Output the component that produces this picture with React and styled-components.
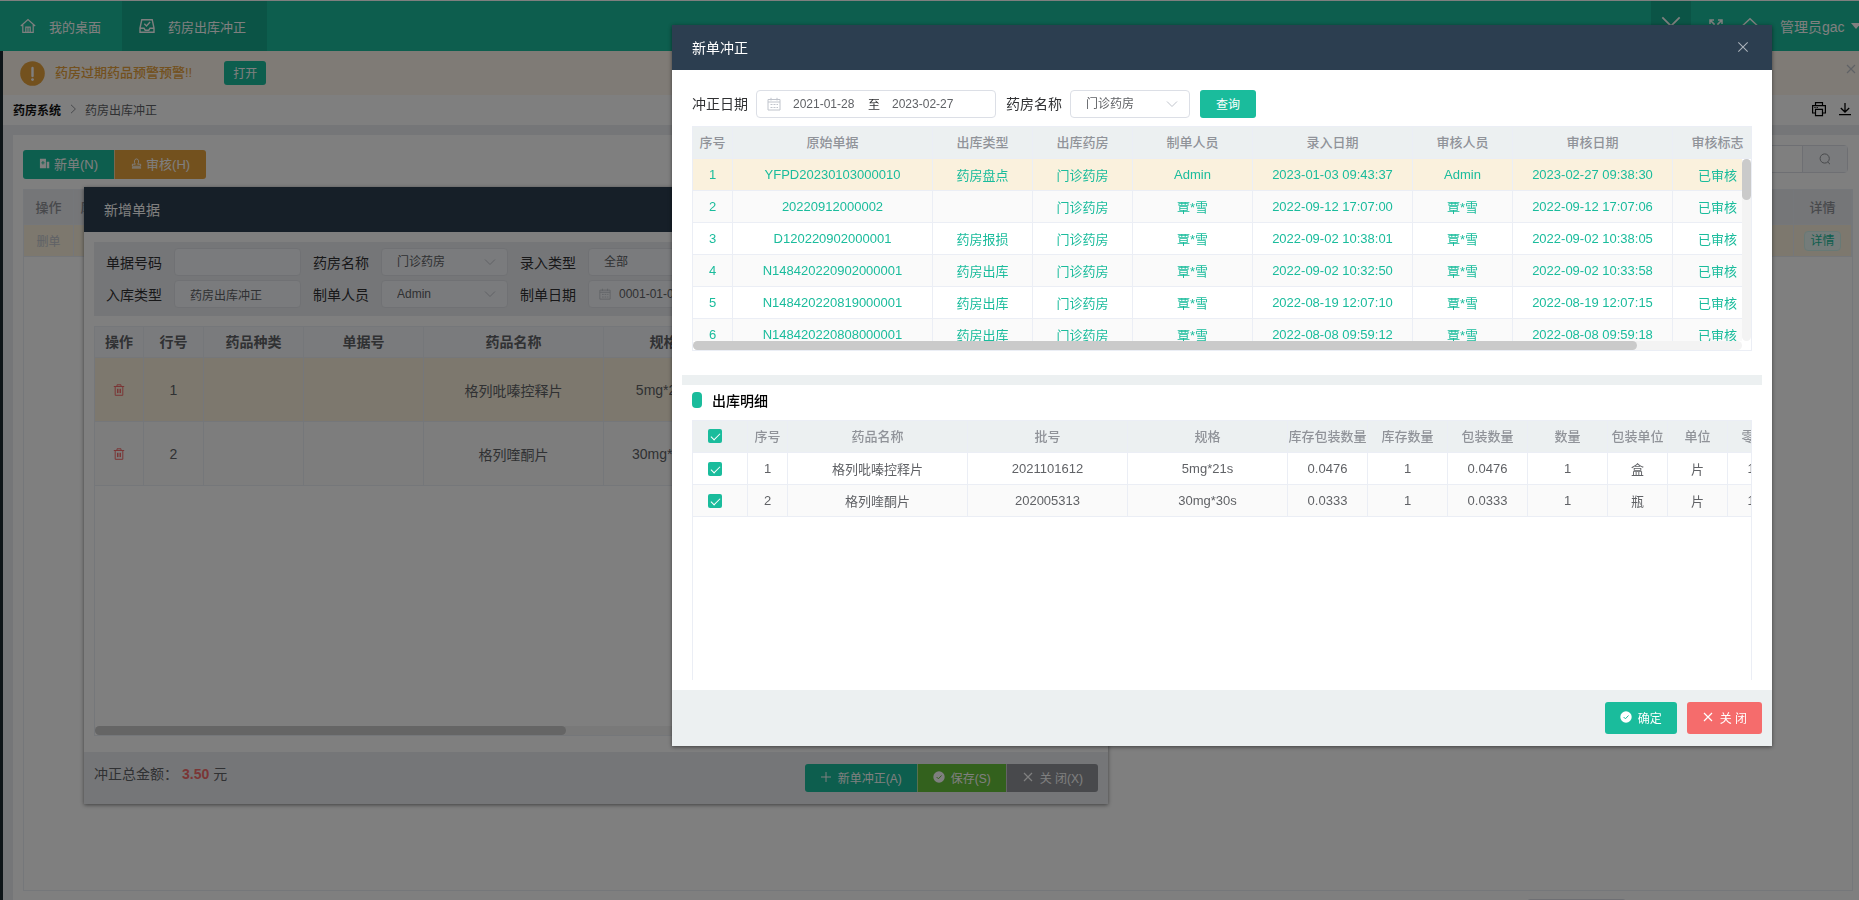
import React from "react";
import styled, { createGlobalStyle, css } from "styled-components";

const color = {
  primary: "#1abc9c",
  primaryDark: "#17a98c",
  success: "#67c23a",
  warning: "#e6a23c",
  danger: "#f56c6c",
  info: "#909399",
  navy: "#2c3e50",
  panel: "#ecf0f1",
  grey: "#ebecf0",
  line: "#ebeef5",
  field: "#dcdfe6",
  highlight: "#faf1dd",
  text: "#606266",
};

const GlobalStyle = createGlobalStyle`
  * { box-sizing: border-box; }
  body {
    margin: 0;
    overflow: hidden;
    color: ${color.text};
    font-family: "Liberation Sans", "Noto Sans CJK SC", sans-serif;
    font-size: 13px;
    background: #fff;
  }
  button, input, select { font-family: inherit; }
  button { cursor: pointer; }
`;

/* ---------- icons ---------- */

const Svg = styled.svg`
  flex: none;
  width: ${(p) => p.$size || 12}px;
  height: ${(p) => p.$size || 12}px;
  fill: none;
  stroke: currentColor;
  stroke-width: ${(p) => p.$stroke || 1};
`;

const HomeIcon = () => (
  <Svg $size={16} viewBox="0 0 16 16" $stroke={1.2} aria-hidden="true">
    <path d="M.8 8 8 1.6 15.2 8M2.8 6.600V14.400h10.400V6.600M5.800 14V9.200h4.400V14M8 9.200v5" />
  </Svg>
);
const InboxIcon = () => (
  <Svg $size={16} viewBox="0 0 16 16" $stroke={1.4} aria-hidden="true">
    <path d="M2.8 1.7h10.4L15 10v4.3H1V10zM1 10.2h4l1.2 2h3.6l1.2-2h4M5.3 5.8l2.2 2.2 3.6-4" />
  </Svg>
);
const CrossIcon = ({ size = 12, stroke = 1.2 }) => (
  <Svg $size={size} viewBox="0 0 12 12" $stroke={stroke} aria-hidden="true">
    <path d="m2 2 8 8m0-8-8 8" />
  </Svg>
);
const ExpandIcon = () => (
  <Svg $size={16} viewBox="0 0 16 16" $stroke={1.5} aria-hidden="true">
    <path d="M2 6V2h4M2 2l4.6 4.6M14 6V2h-4m4 0L9.4 6.6M2 10v4h4m-4 0 4.6-4.6M14 10v4h-4m4 0L9.4 9.4" />
  </Svg>
);
const RoofIcon = () => (
  <Svg $size={18} viewBox="0 0 18 18" $stroke={1.5} aria-hidden="true">
    <path d="m1 9.3 8-7.6 8 7.6M4 8v8h10V8" />
  </Svg>
);
const WarnIcon = () => (
  <Svg $size={25} viewBox="0 0 25 25" aria-hidden="true">
    <circle cx="12.5" cy="12.5" r="12.3" fill={color.warning} stroke="none" />
    <path d="M12.5 7v8" stroke="#fff" strokeWidth="2.4" strokeLinecap="round" />
    <circle cx="12.5" cy="18.6" r="1.4" fill="#fff" stroke="none" />
  </Svg>
);
const ChevronRight = () => (
  <Svg $size={10} viewBox="0 0 10 10" aria-hidden="true">
    <path d="m3 .8 4.4 4.2L3 9.2" />
  </Svg>
);
const PrintIcon = () => (
  <Svg $size={16} viewBox="0 0 16 16" $stroke={1.2} aria-hidden="true">
    <path d="M4.5 4.5V1.6h7v2.9M4.5 12H1.6V4.6h12.8V12h-2.9M4.5 8.4h7v6.2h-7zM3.4 6.5h1.2m1 0h1.2" />
  </Svg>
);
const DownloadIcon = () => (
  <Svg $size={16} viewBox="0 0 16 16" $stroke={1.3} aria-hidden="true">
    <path d="M8 2v9M3.8 7 8 11l4.2-4M2 13.6h12" />
  </Svg>
);
const SearchIcon = () => (
  <Svg viewBox="0 0 12 12" aria-hidden="true">
    <circle cx="5.7" cy="5.5" r="4.6" />
    <path d="m8.8 9 2.2 2.2" />
  </Svg>
);
const NewDocIcon = () => (
  <Svg $size={11} viewBox="0 0 12 12" aria-hidden="true">
    <path
      d="M1 .8h6.6v10.4H1zM8.4 4h2.8v7.2H8.4zM2.4 4.8h1.4V3.4h1v1.4h1.4v1H4.8v1.4h-1V5.8H2.4z"
      fill="currentColor"
      fillRule="evenodd"
      stroke="none"
    />
  </Svg>
);
const StampIcon = () => (
  <Svg $size={11} viewBox="0 0 12 12" aria-hidden="true">
    <path d="M4.7 6.8C3 4.6 3.5 1 6 1s3 3.6 1.3 5.8h3.2V9h-9V6.8z" />
    <path d="M1 10.8h10" strokeWidth="1.4" />
  </Svg>
);
const TrashIcon = () => (
  <Svg viewBox="0 0 12 12" aria-hidden="true">
    <path d="M.8 2.5h10.4M4 2.3V.8h4v1.5M2.2 2.7v8.6h7.6V2.7M4.5 4.8v4.3m1.5-4.3v4.3m1.5-4.3v4.3" />
  </Svg>
);
const PlusIcon = () => (
  <Svg viewBox="0 0 12 12" aria-hidden="true">
    <path d="M6 1v10M1 6h10" />
  </Svg>
);
const CheckCircleIcon = ({ tick }) => (
  <Svg viewBox="0 0 12 12" aria-hidden="true">
    <circle cx="6" cy="6" r="5.7" fill="currentColor" stroke="none" />
    <path d="m3.6 6 1.8 1.8 3.1-3.3" stroke={tick} />
  </Svg>
);
const CalendarIcon = ({ size = 14 }) => (
  <Svg $size={size} viewBox="0 0 14 14" aria-hidden="true">
    <path d="M1 2.5h12V13H1zM1 5h12M4 .8v2.7M10 .8v2.7M3.500 7.500h2m1 0h2m1 0h1.500m-7.500 3h2m1 0h2m1 0h1.500" />
  </Svg>
);
const ChevronDown = () => (
  <Svg viewBox="0 0 12 12" aria-hidden="true">
    <path d="m1 3.5 5 5 5-5" />
  </Svg>
);

/* ---------- controls ---------- */

const tones = {
  primary: color.primary,
  success: color.success,
  warning: color.warning,
  danger: color.danger,
  info: color.info,
};

const Button = styled.button`
  display: inline-flex;
  align-items: center;
  justify-content: center;
  gap: ${(p) => p.$gap || 6}px;
  height: ${(p) => p.$h || 28}px;
  padding: 0 ${(p) => p.$pad || 15}px 2px;
  border: 0;
  border-radius: 3px;
  background: ${(p) => tones[p.$tone]};
  color: #fff;
  font-size: ${(p) => p.$font || 12}px;
  white-space: nowrap;
`;

const ButtonGroup = styled.div`
  display: flex;
  ${Button} {
    border-radius: 0;
  }
  ${Button}:first-child {
    border-radius: 3px 0 0 3px;
  }
  ${Button}:last-child {
    border-radius: 0 3px 3px 0;
  }
  ${Button} + ${Button} {
    border-left: 1px solid rgba(255, 255, 255, 0.5);
  }
`;

const IconButton = styled.button`
  display: flex;
  align-items: center;
  justify-content: center;
  padding: 0;
  border: 0;
  background: none;
  color: inherit;
`;

const Field = styled.div`
  display: flex;
  align-items: center;
  width: ${(p) => p.$w}px;
  height: 28px;
  padding: 0 ${(p) => (p.$icon ? 10 : 11)}px 0 ${(p) => (p.$icon ? 10 : 15)}px;
  border: 1px solid ${color.field};
  border-radius: 4px;
  background: #fff;
  color: #c0c4cc;
`;

const bareControl = css`
  min-width: 0;
  height: 100%;
  padding: 0;
  border: 0;
  outline: 0;
  background: none;
  color: ${color.text};
  font-size: 12px;
`;

const TextInput = styled.input`
  ${bareControl}
  width: ${(p) => (p.$w ? `${p.$w}px` : "100%")};
`;

const Select = styled.select`
  ${bareControl}
  flex: 1;
  appearance: none;
`;

const Label = styled.label`
  color: #303133;
  font-size: 14px;
  white-space: nowrap;
`;

const Checkbox = styled.input.attrs({ type: "checkbox" })`
  appearance: none;
  display: block;
  position: relative;
  width: 14px;
  height: 14px;
  margin: 0;
  border-radius: 2px;
  background: ${color.primary};
  &:checked::after {
    content: "";
    position: absolute;
    left: 5px;
    top: 2px;
    width: 4px;
    height: 8px;
    border: solid #fff;
    border-width: 0 1px 1px 0;
    transform: rotate(45deg);
  }
`;

function SelectField({ id, value, width }) {
  return (
    <Field $w={width}>
      <Select id={id} defaultValue={value}>
        <option>{value}</option>
      </Select>
      <ChevronDown />
    </Field>
  );
}

/* ---------- tables ---------- */

const Table = styled.table`
  table-layout: fixed;
  width: ${(p) => (p.$w ? `${p.$w}px` : "100%")};
  border-collapse: separate;
  border-spacing: 0;
  font-size: ${(p) => p.$font || 13}px;
`;

const Th = styled.th`
  height: ${(p) => p.$h || 32}px;
  padding: 0 0 2px;
  border-right: 1px solid ${color.line};
  border-bottom: 1px solid ${color.line};
  background: ${(p) => p.$bg || color.panel};
  color: ${(p) => p.$color || color.info};
  font-weight: ${(p) => p.$weight || 500};
  text-align: center;
  white-space: nowrap;
`;

const Td = styled.td`
  height: ${(p) => p.$h || 32}px;
  padding: 0;
  border-right: 1px solid ${color.line};
  border-bottom: 1px solid ${color.line};
  text-align: center;
  white-space: nowrap;
`;

const Tr = styled.tr`
  background: ${(p) => (p.$active ? color.highlight : p.$striped ? "#fafafa" : "#fff")};
  color: ${(p) => p.$color || "inherit"};
`;

const CheckCell = styled.div`
  padding-left: 15px;
`;

const Columns = ({ widths }) => (
  <colgroup>
    {widths.map((w, i) => (
      <col key={i} style={{ width: w }} />
    ))}
  </colgroup>
);

const total = (widths) => widths.reduce((a, b) => a + b, 0);

const Frame = styled.div`
  display: flex;
  flex-direction: column;
  height: ${(p) => p.$h}px;
  border: 1px solid ${color.line};
  border-bottom-width: ${(p) => (p.$open ? 0 : 1)}px;
  background: #fff;
  overflow: hidden;
`;

const HeadClip = styled.div`
  flex: none;
  overflow: hidden;
`;

const ScrollArea = styled.div`
  flex: 1;
  display: grid;
  grid-template-columns: minmax(0, 1fr) ${(p) => (p.$vertical ? "9px" : "0")};
  grid-template-rows: minmax(0, 1fr) 9px;
  min-height: 0;
`;

const Clip = styled.div`
  overflow: hidden;
`;

const Track = styled.div`
  border-radius: 5px;
  background: #f3f3f3;
`;

const Thumb = styled.div`
  width: ${(p) => p.$w || "100%"};
  height: ${(p) => p.$h || "100%"};
  border-radius: 5px;
  background: #cacaca;
`;

/* ---------- application page ---------- */

const Page = styled.div`
  display: flex;
  flex-direction: column;
  height: 100vh;
  border-top: 1px solid #fff;
  overflow: hidden;
`;

const TopBar = styled.header`
  display: flex;
  flex: none;
  height: 50px;
  padding-left: 3px;
  background: ${color.primary};
  color: #fff;
`;

const NavTab = styled.a`
  display: flex;
  align-items: center;
  gap: 13px;
  padding: 0 21px 0 17px;
  background: ${(p) => (p.$active ? color.primaryDark : "none")};
  color: #fff;
  text-decoration: none;
`;

const Actions = styled.div`
  display: flex;
  flex: none;
  width: 208px;
  margin-left: auto;
  overflow: hidden;
  ${IconButton} {
    flex: none;
    width: 34px;
  }
  ${IconButton}:first-child {
    width: 40px;
    margin-right: 8px;
    background: ${color.primaryDark};
  }
`;

const User = styled.button`
  display: flex;
  flex: none;
  align-items: center;
  gap: 6px;
  padding: 0 0 0 13px;
  border: 0;
  background: none;
  color: #fff;
  font-size: 14px;
  &::after {
    content: "";
    border: 5px solid transparent;
    border-top: 6px solid #fff;
    border-bottom: 0;
  }
`;

const Body = styled.div`
  display: flex;
  flex: 1;
  min-height: 0;
`;

const SideStrip = styled.div`
  width: 3px;
  background: #1c2a30;
`;

const Main = styled.main`
  flex: 1;
  display: flex;
  flex-direction: column;
  min-width: 0;
  background: ${color.grey};
`;

const Alert = styled.div`
  display: flex;
  flex: none;
  align-items: center;
  height: 44px;
  padding: 0 2px 0 17px;
  background: #fff6ec;
  color: ${color.warning};
  font-weight: 500;
`;

const AlertText = styled.span`
  margin: 0 32px 0 10px;
  padding-bottom: 3px;
`;

const AlertClose = styled(IconButton)`
  align-self: flex-start;
  margin: 12px 0 0 auto;
  color: #c0c4cc;
`;

const Crumbs = styled.nav`
  display: flex;
  flex: none;
  align-items: center;
  gap: 7px;
  height: 30px;
  padding: 0 6px 2px 10px;
  background: #fff;
  font-size: 12px;
  svg {
    color: #909399;
  }
`;

const CrumbLink = styled.a`
  color: #111;
  font-weight: 700;
  text-decoration: none;
`;

const CrumbTools = styled.div`
  display: flex;
  gap: 10px;
  margin-left: auto;
  svg {
    color: #000;
  }
`;

const Panel = styled.section`
  flex: 1;
  min-height: 0;
  margin: 10px 0 0 10px;
  padding: 10px 6px 0 10px;
  background: #fff;
  overflow: hidden;
`;

const Toolbar = styled.div`
  display: flex;
  justify-content: space-between;
  height: 44px;
  padding: 0 5px 0 0;
`;

const ToolButtons = styled(ButtonGroup)`
  padding-top: 5px;
`;

const Search = styled.div`
  display: flex;
  width: 260px;
  height: 28px;
  border: 1px solid ${color.field};
  border-radius: 4px;
  ${TextInput} {
    flex: 1;
    padding: 0 10px;
  }
  ${IconButton} {
    width: 45px;
    border-left: 1px solid ${color.field};
    background: #f5f7fa;
    color: ${color.info};
  }
`;

const ListFrame = styled.div`
  height: calc(100vh - 198px);
  border: 1px solid ${color.line};
  overflow: hidden;
`;

const RowLink = styled.a`
  color: #c0c4cc;
  font-size: 12px;
  text-decoration: none;
`;

const DetailTag = styled.button`
  height: 20px;
  padding: 0 5px;
  border: 1px solid #d1f2eb;
  border-radius: 4px;
  background: #e8f8f5;
  color: ${color.primary};
  font-size: 12px;
  line-height: 18px;
`;

const Pager = styled.div`
  width: 99px;
  height: 28px;
  margin: 8px 227px 0 auto;
  border: 1px solid ${color.field};
  border-radius: 3px;
`;

/* ---------- dialogs ---------- */

const Dialog = styled.section`
  width: ${(p) => p.$w}px;
  background: #fff;
  box-shadow: 0 1px 4px rgba(0, 0, 0, 0.5);
`;

const DialogHead = styled.header`
  display: flex;
  align-items: center;
  justify-content: space-between;
  height: 45px;
  padding: 0 22px 2px 20px;
  background: ${color.navy};
  color: #fff;
`;

const DialogTitle = styled.h2`
  margin: 0;
  font-size: 14px;
  font-weight: 400;
`;

const CloseButton = styled(IconButton)`
  color: #aab2ba;
`;

const OrderLayer = styled.div`
  position: absolute;
  left: 84px;
  top: 187px;
`;

const Mask = styled.div`
  position: fixed;
  inset: 0;
  display: flex;
  align-items: flex-start;
  justify-content: flex-end;
  padding: 25px 87px 0 0;
  background: rgba(0, 0, 0, 0.5);
`;

const OrderBody = styled.div`
  display: flex;
  flex-direction: column;
  gap: 10px;
  padding: 10px 10px 16px;
`;

const OrderForm = styled.form`
  display: grid;
  grid-template-columns: repeat(3, 56px 127px);
  align-items: center;
  gap: 4px 12px;
  padding: 6px 12px 8px;
  background: ${color.grey};
  ${Field} {
    border-color: #e0e3e9;
    background: #f5f7fa;
  }
`;

const OrderFoot = styled.footer`
  display: flex;
  align-items: flex-start;
  justify-content: space-between;
  height: 52px;
  padding: 12px 10px;
  background: ${color.grey};
  font-size: 14px;
  line-height: 20px;
`;

const Amount = styled.strong`
  margin: 0 4px;
  color: ${color.danger};
`;

const DeleteButton = styled(IconButton)`
  margin: 0 auto;
  color: ${color.danger};
`;

const ReverseBody = styled.div`
  padding: 20px 10px 10px;
`;

const Block = styled.div`
  padding: 0 10px;
`;

const Query = styled.form`
  display: flex;
  align-items: center;
  gap: 8px;
  margin-bottom: 8px;
`;

const QueryGroup = styled.div`
  display: flex;
  align-items: center;
  gap: 8px;
  margin-right: 2px;
  ${Label} {
    padding-bottom: 2px;
  }
`;

const DateInput = styled(TextInput)`
  margin-left: ${(p) => p.$gap || 12}px;
`;

const RangeWord = styled.span`
  padding-bottom: 2px;
  color: #303133;
  font-size: 12px;
`;

const Divider = styled.hr`
  height: 10px;
  margin: 24px 0 0;
  border: 0;
  background: ${color.panel};
`;

const SectionTitle = styled.h3`
  display: flex;
  align-items: center;
  gap: 10px;
  height: 29px;
  margin: 0 0 6px;
  color: #000;
  font-size: 14px;
  font-weight: 500;
  &::before {
    content: "";
    width: 10px;
    height: 16px;
    border-radius: 4px;
    background: ${color.primary};
  }
`;

const ReverseFoot = styled.footer`
  display: flex;
  align-items: center;
  justify-content: flex-end;
  gap: 10px;
  height: 56px;
  padding: 0 10px;
  background: ${color.panel};
`;

/* ---------- data ---------- */

const orderCols = ["操作", "行号", "药品种类", "单据号", "药品名称", "规格", "批号", "单位", "数量"];
const orderWidths = [49, 60, 100, 120, 180, 120, 120, 120, 133];
const orderRows = [
  ["1", "", "", "格列吡嗪控释片", "5mg*21s", "", "", ""],
  ["2", "", "", "格列喹酮片", "30mg*30s", "", "", ""],
];

const sourceCols = ["序号", "原始单据", "出库类型", "出库药房", "制单人员", "录入日期", "审核人员", "审核日期", "审核标志"];
const sourceWidths = [40, 200, 100, 100, 120, 160, 100, 160, 90];
const sourceRows = [
  ["1", "YFPD20230103000010", "药房盘点", "门诊药房", "Admin", "2023-01-03 09:43:37", "Admin", "2023-02-27 09:38:30", "已审核"],
  ["2", "20220912000002", "", "门诊药房", "覃*雪", "2022-09-12 17:07:00", "覃*雪", "2022-09-12 17:07:06", "已审核"],
  ["3", "D120220902000001", "药房报损", "门诊药房", "覃*雪", "2022-09-02 10:38:01", "覃*雪", "2022-09-02 10:38:05", "已审核"],
  ["4", "N148420220902000001", "药房出库", "门诊药房", "覃*雪", "2022-09-02 10:32:50", "覃*雪", "2022-09-02 10:33:58", "已审核"],
  ["5", "N148420220819000001", "药房出库", "门诊药房", "覃*雪", "2022-08-19 12:07:10", "覃*雪", "2022-08-19 12:07:15", "已审核"],
  ["6", "N148420220808000001", "药房出库", "门诊药房", "覃*雪", "2022-08-08 09:59:12", "覃*雪", "2022-08-08 09:59:18", "已审核"],
];

const detailCols = ["序号", "药品名称", "批号", "规格", "库存包装数量", "库存数量", "包装数量", "数量", "包装单位", "单位", "零售单价"];
const detailWidths = [55, 40, 180, 160, 160, 80, 80, 80, 80, 60, 60, 80];
const detailRows = [
  ["1", "格列吡嗪控释片", "2021101612", "5mg*21s", "0.0476", "1", "0.0476", "1", "盒", "片", "1.0000"],
  ["2", "格列喹酮片", "202005313", "30mg*30s", "0.0333", "1", "0.0333", "1", "瓶", "片", "1.0000"],
];

/* ---------- views ---------- */

function ListPage() {
  return (
    <Page>
      <TopBar>
        <NavTab href="#desk"><HomeIcon />我的桌面</NavTab>
        <NavTab href="#reverse" $active><InboxIcon />药房出库冲正</NavTab>
        <Actions>
          <IconButton aria-label="关闭标签"><CrossIcon size={26} stroke={0.8} /></IconButton>
          <IconButton aria-label="全屏"><ExpandIcon /></IconButton>
          <IconButton aria-label="首页"><RoofIcon /></IconButton>
          <User>管理员gac</User>
        </Actions>
      </TopBar>
      <Body>
        <SideStrip />
        <Main>
          <Alert>
            <WarnIcon />
            <AlertText>药房过期药品预警预警!!</AlertText>
            <Button $tone="primary" $h={24} $pad={9}>打开</Button>
            <AlertClose aria-label="关闭提醒"><CrossIcon size={12} /></AlertClose>
          </Alert>
          <Crumbs>
            <CrumbLink href="#pharmacy">药房系统</CrumbLink>
            <ChevronRight />
            <span>药房出库冲正</span>
            <CrumbTools>
              <IconButton aria-label="打印"><PrintIcon /></IconButton>
              <IconButton aria-label="下载"><DownloadIcon /></IconButton>
            </CrumbTools>
          </Crumbs>
          <Panel>
            <Toolbar>
              <ToolButtons>
                <Button $tone="primary" $h={29} $pad={16} $gap={4} $font={13}><NewDocIcon />新单(N)</Button>
                <Button $tone="warning" $h={29} $pad={16} $gap={4} $font={13}><StampIcon />审核(H)</Button>
              </ToolButtons>
              <Search>
                <TextInput aria-label="搜索" />
                <IconButton aria-label="查找"><SearchIcon /></IconButton>
              </Search>
            </Toolbar>
            <ListFrame>
              <Table>
                <colgroup>
                  <col style={{ width: 50 }} />
                  <col style={{ width: 66 }} />
                  <col />
                  <col style={{ width: 58 }} />
                </colgroup>
                <thead>
                  <tr>
                    <Th $h={35} $bg={color.grey}>操作</Th>
                    <Th $h={35} $bg={color.grey}>库房名称</Th>
                    <Th $h={35} $bg={color.grey} />
                    <Th $h={35} $bg={color.grey}>详情</Th>
                  </tr>
                </thead>
                <tbody>
                  <Tr $active>
                    <Td><RowLink href="#delete">删单</RowLink></Td>
                    <Td />
                    <Td />
                    <Td><DetailTag>详情</DetailTag></Td>
                  </Tr>
                </tbody>
              </Table>
            </ListFrame>
            <Pager />
          </Panel>
        </Main>
      </Body>
    </Page>
  );
}

function OrderDialog() {
  return (
    <OrderLayer>
      <Dialog $w={1024}>
        <DialogHead>
          <DialogTitle>新增单据</DialogTitle>
        </DialogHead>
        <OrderBody>
          <OrderForm>
            <Label htmlFor="no">单据号码</Label>
            <Field $w={127}><TextInput id="no" /></Field>
            <Label htmlFor="store">药房名称</Label>
            <SelectField id="store" width={127} value="门诊药房" />
            <Label htmlFor="entry">录入类型</Label>
            <SelectField id="entry" width={127} value="全部" />
            <Label htmlFor="kind">入库类型</Label>
            <Field $w={127}><TextInput id="kind" defaultValue="药房出库冲正" /></Field>
            <Label htmlFor="maker">制单人员</Label>
            <SelectField id="maker" width={127} value="Admin" />
            <Label htmlFor="made">制单日期</Label>
            <Field $w={127} $icon>
              <CalendarIcon size={12} />
              <DateInput id="made" $w={80} $gap={8} defaultValue="0001-01-01" />
            </Field>
          </OrderForm>
          <Frame $h={410}>
            <HeadClip>
              <Table $w={total(orderWidths)} $font={14}>
                <Columns widths={orderWidths} />
                <thead>
                  <tr>
                    {orderCols.map((c) => (
                      <Th key={c} $h={31} $bg="#f5f7fa" $color={color.text} $weight={700}>{c}</Th>
                    ))}
                  </tr>
                </thead>
                <tbody>
                  {orderRows.map((row, i) => (
                    <Tr key={i} $active={i === 0} $striped={i === 1}>
                      <Td $h={64}><DeleteButton aria-label="删除"><TrashIcon /></DeleteButton></Td>
                      {row.map((v, j) => <Td key={j} $h={64}>{v}</Td>)}
                    </Tr>
                  ))}
                </tbody>
              </Table>
            </HeadClip>
            <ScrollArea>
              <div />
              <div />
              <Track><Thumb $w="47%" /></Track>
            </ScrollArea>
          </Frame>
        </OrderBody>
        <OrderFoot>
          <span>冲正总金额：<Amount>3.50</Amount>元</span>
          <ButtonGroup>
            <Button $tone="primary"><PlusIcon />新单冲正(A)</Button>
            <Button $tone="success"><CheckCircleIcon tick={color.success} />保存(S)</Button>
            <Button $tone="info"><CrossIcon />关 闭(X)</Button>
          </ButtonGroup>
        </OrderFoot>
      </Dialog>
    </OrderLayer>
  );
}

function ReverseDialog() {
  return (
    <Dialog $w={1100} role="dialog" aria-label="新单冲正">
      <DialogHead>
        <DialogTitle>新单冲正</DialogTitle>
        <CloseButton aria-label="关闭"><CrossIcon size={14} stroke={0.9} /></CloseButton>
      </DialogHead>
      <ReverseBody>
        <Block>
          <Query>
            <QueryGroup>
              <Label htmlFor="from">冲正日期</Label>
              <Field $w={240} $icon>
                <CalendarIcon />
                <DateInput id="from" $w={75} defaultValue="2021-01-28" />
                <RangeWord>至</RangeWord>
                <DateInput aria-label="结束日期" $w={75} defaultValue="2023-02-27" />
              </Field>
            </QueryGroup>
            <QueryGroup>
              <Label htmlFor="room">药房名称</Label>
              <SelectField id="room" width={120} value="门诊药房" />
            </QueryGroup>
            <Button type="button" $tone="primary" $pad={16}>查询</Button>
          </Query>
          <Frame $h={225}>
            <HeadClip>
              <Table $w={total(sourceWidths)}>
                <Columns widths={sourceWidths} />
                <thead>
                  <tr>{sourceCols.map((c) => <Th key={c}>{c}</Th>)}</tr>
                </thead>
              </Table>
            </HeadClip>
            <ScrollArea $vertical>
              <Clip>
                <Table $w={total(sourceWidths)}>
                  <Columns widths={sourceWidths} />
                  <tbody>
                    {sourceRows.map((row, i) => (
                      <Tr key={i} $active={i === 0} $striped={i % 2 === 1} $color={color.primary}>
                        {row.map((v, j) => <Td key={j}>{v}</Td>)}
                      </Tr>
                    ))}
                  </tbody>
                </Table>
              </Clip>
              <Track><Thumb $h="41px" /></Track>
              <Track><Thumb $w="90%" /></Track>
            </ScrollArea>
          </Frame>
        </Block>
        <Divider />
        <Block>
          <SectionTitle>出库明细</SectionTitle>
          <Frame $h={260} $open>
            <Table $w={total(detailWidths)}>
              <Columns widths={detailWidths} />
              <thead>
                <tr>
                  <Th><CheckCell><Checkbox aria-label="全选" defaultChecked /></CheckCell></Th>
                  {detailCols.map((c) => <Th key={c}>{c}</Th>)}
                </tr>
              </thead>
              <tbody>
                {detailRows.map((row, i) => (
                  <Tr key={i} $striped={i === 1}>
                    <Td><CheckCell><Checkbox aria-label={`选择第${row[0]}行`} defaultChecked /></CheckCell></Td>
                    {row.map((v, j) => <Td key={j}>{v}</Td>)}
                  </Tr>
                ))}
              </tbody>
            </Table>
          </Frame>
        </Block>
      </ReverseBody>
      <ReverseFoot>
        <Button $tone="primary" $h={32}><CheckCircleIcon tick={color.primary} />确定</Button>
        <Button $tone="danger" $h={32}><CrossIcon />关 闭</Button>
      </ReverseFoot>
    </Dialog>
  );
}

export default function App() {
  return (
    <>
      <GlobalStyle />
      <ListPage />
      <OrderDialog />
      <Mask>
        <ReverseDialog />
      </Mask>
    </>
  );
}
